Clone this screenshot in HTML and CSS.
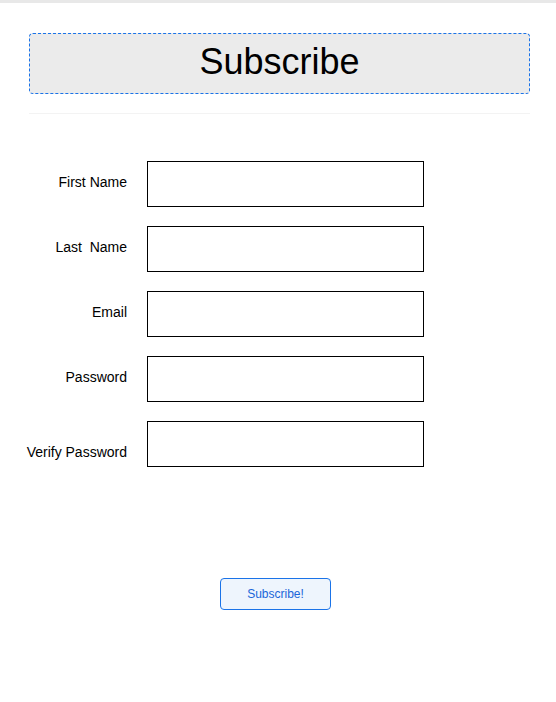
FILE: index.html
```html
<!DOCTYPE html>
<html>
<head>
<meta charset="utf-8">
<link rel="stylesheet" href="styles.css">
</head>
<body>
<div class="topbar"></div>
<div class="page">
  <h1 class="title">Subscribe</h1>
  <div class="divider"></div>
  <form class="form">
    <label class="label">First Name</label>
    <input class="field" type="text">
    <label class="label">Last&nbsp; Name</label>
    <input class="field" type="text">
    <label class="label">Email</label>
    <input class="field" type="text">
    <label class="label">Password</label>
    <input class="field" type="password">
    <label class="label label-low">Verify Password</label>
    <input class="field" type="password">
  </form>
  <div class="actions">
    <button class="submit" type="button">Subscribe!</button>
  </div>
</div>
</body>
</html>
```

FILE: styles.css
```css
html, body {
  margin: 0;
  padding: 0;
  background: #ffffff;
  font-family: "Liberation Sans", Arial, Helvetica, sans-serif;
  color: #000;
}
.topbar {
  height: 3px;
  background: #e8e8e8;
}
.page {
  padding: 30px 26px 0 29px;
}
.title {
  margin: 0;
  height: 59px;
  box-sizing: content-box;
  border: 1px dashed #1a73e8;
  border-radius: 4px;
  background: #ebebeb;
  font-size: 36px;
  font-weight: normal;
  line-height: 56px;
  text-align: center;
}
.divider {
  margin-top: 19px;
  height: 1px;
  background: #f3f3f3;
}
.form {
  margin: 47px 0 0 0;
  display: grid;
  grid-template-columns: 98px 277px;
  column-gap: 20px;
  row-gap: 19px;
  align-items: center;
}
.label {
  font-size: 14px;
  text-align: right;
  margin-top: -4px;
}
.label-low {
  margin-top: 16px;
  margin-left: -10px;
}
.field {
  box-sizing: border-box;
  width: 277px;
  height: 46px;
  margin: 0;
  border: 1px solid #000;
  border-radius: 0;
  background: #fff;
  padding: 0 6px;
  font-size: 14px;
  font-family: inherit;
}
.actions {
  margin-top: 111px;
  padding-left: 191px;
}
.submit {
  box-sizing: border-box;
  width: 111px;
  height: 32px;
  border: 1px solid #1a73e8;
  border-radius: 4px;
  background: #eef5fd;
  color: #1a66d9;
  font-family: inherit;
  font-size: 12px;
  padding: 0;
}
```
